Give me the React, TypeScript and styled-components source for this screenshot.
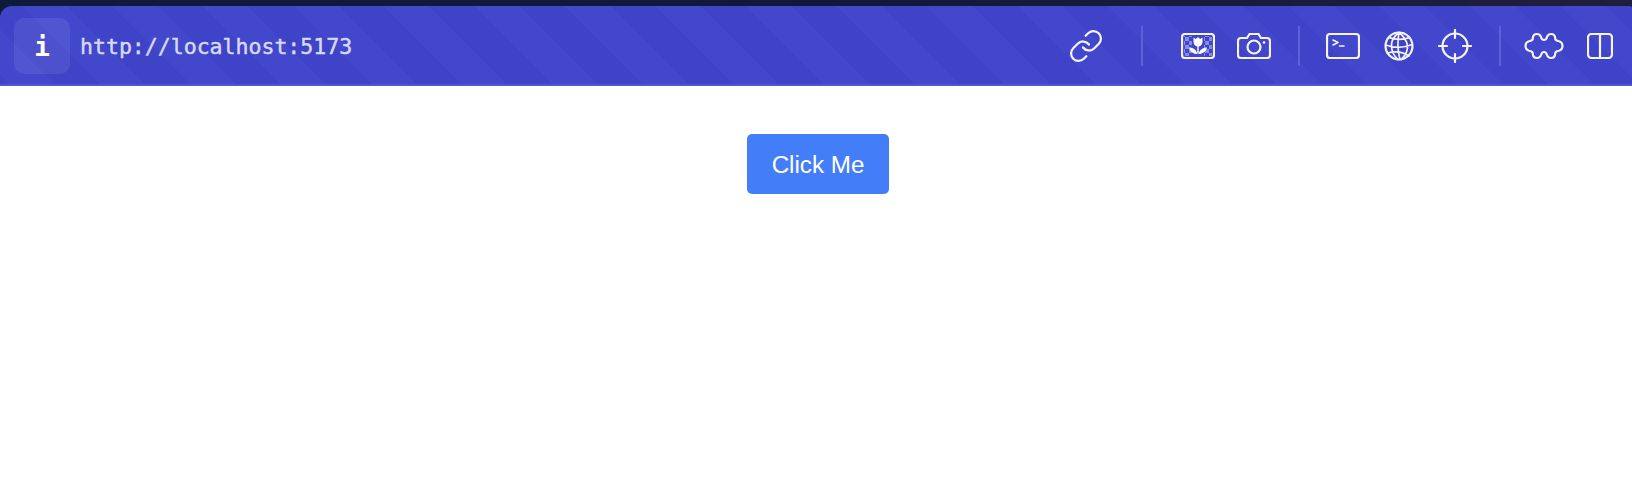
import React from "react";
import styled, { createGlobalStyle } from "styled-components";

const GlobalStyle = createGlobalStyle`
  html, body {
    margin: 0;
    background: #ffffff;
  }
`;

const TopEdge = styled.div`
  padding-top: 6px;
  background: linear-gradient(90deg, #0f1b3b 0%, #10193a 50%, #1f1f3d 100%);
`;

const Toolbar = styled.header`
  height: 80px;
  box-sizing: border-box;
  display: flex;
  align-items: center;
  padding: 2px 4px 0 14px;
  border-bottom: 2px solid #5055d0;
  border-radius: 12px 2px 0 0;
  background: repeating-linear-gradient(
    45deg,
    #3f43c8 0 6.5px,
    #4347cc 6.5px 38.5px,
    #3f43c8 38.5px 64px
  );
`;

const InfoBadge = styled.div`
  width: 56px;
  height: 56px;
  padding-top: 1px;
  box-sizing: border-box;
  border-radius: 10px;
  display: flex;
  align-items: center;
  justify-content: center;
  background: rgba(255, 255, 255, 0.08);
  color: #ffffff;
  font: 700 26px "DejaVu Sans Mono", monospace;
`;

const Url = styled.span`
  margin-left: 10px;
  padding-top: 1px;
  flex: 1;
  color: #d6d9f6;
  font: 400 21.6px "DejaVu Sans Mono", monospace;
  letter-spacing: -0.04px;
  -webkit-text-stroke: 0.45px #d6d9f6;
`;

const IconSlot = styled.div`
  width: 56px;
  height: 56px;
  display: flex;
  align-items: center;
  justify-content: center;

  svg {
    display: block;
    fill: none;
    stroke: #f4f4ff;
    stroke-width: 2.2;
    stroke-linecap: round;
    stroke-linejoin: round;
  }
`;

const Divider = styled.div<{ $left: number }>`
  width: 2px;
  height: 40px;
  margin: 0 ${(p) => (p.$left > 20 ? 27 : 15)}px 0 ${(p) => p.$left}px;
  background: #5d61d8;
`;

const Stage = styled.main`
  height: 400px;
  display: flex;
  justify-content: center;
  align-items: flex-start;
  padding: 48px 0 0 4px;
  box-sizing: border-box;
`;

const ActionButton = styled.button`
  width: 142px;
  height: 60px;
  padding: 2px 0 0;
  border: none;
  border-radius: 5px;
  background: #437ef8;
  color: #ffffff;
  font: 400 24.2px "Liberation Sans", Arial, sans-serif;
`;

const LinkIcon = () => (
  <svg width="36" height="36" viewBox="0 0 24 24" style={{ strokeWidth: 1.5 }}>
    <path d="M10 13a5 5 0 0 0 7.540.540l3-3a5 5 0 0 0-7.070-7.070l-1.720 1.710" />
    <path d="M14 11a5 5 0 0 0-7.540-.540l-3 3a5 5 0 0 0 7.070 7.070l1.710-1.710" />
  </svg>
);

const TulipIcon = () => (
  <svg width="34" height="26" viewBox="0 0 34 26">
    <defs>
      <pattern id="checks" width="8" height="8" patternUnits="userSpaceOnUse">
        <rect width="4" height="4" fill="#ffffff" fillOpacity="0.38" stroke="none" />
        <rect x="4" y="4" width="4" height="4" fill="#ffffff" fillOpacity="0.38" stroke="none" />
      </pattern>
    </defs>
    <rect x="1" y="1" width="32" height="24" rx="3" />
    <rect x="3" y="3" width="8" height="20" fill="url(#checks)" stroke="none" />
    <rect x="23" y="3" width="8" height="20" fill="url(#checks)" stroke="none" />
    <path
      d="M12.500 4.500l2.300 1.500L17 4l2.200 2 2.300-1.500v4.500a4.500 4.500 0 0 1-9 0z"
      fill="#ffffff"
      stroke="none"
    />
    <path d="M16.300 21c-4 0-7.300-2.200-8.300-6.500 4.200 0 7.500 2.300 8.300 6.500zM17.700 21c4 0 7.300-2.200 8.300-6.500-4.200 0-7.500 2.300-8.300 6.500z" fill="#ffffff" stroke="none" />
    <path d="M17 12v8" strokeWidth="1.500" />
  </svg>
);

const CameraIcon = () => (
  <svg width="34" height="26" viewBox="0 0 34 26">
    <path d="M4 5h6l2.500-4h9L24 5h6a3 3 0 0 1 3 3v14a3 3 0 0 1-3 3H4a3 3 0 0 1-3-3V8a3 3 0 0 1 3-3z" />
    <circle cx="17" cy="14" r="6.500" />
    <circle cx="27" cy="9.500" r="1.300" fill="#ffffff" stroke="none" />
  </svg>
);

const TerminalIcon = () => (
  <svg width="34" height="26" viewBox="0 0 34 26">
    <rect x="1" y="1" width="32" height="24" rx="3" />
    <path d="M7 7l5 2.500-5 2.500M13.500 13H18" strokeWidth="1.600" />
  </svg>
);

const GlobeIcon = () => (
  <svg width="30" height="30" viewBox="0 0 30 30">
    <circle cx="15" cy="15" r="13.500" />
    <path
      d="M15 1.500C9 6 7 11 7.500 16s2 8.500 6.500 12.500M15 1.500c5 4 8 8.500 8.500 13.500s-2 9-6 13.500M15 1.500c-1.500 8-1.500 18 1 27M5 6.500c6 2.500 15 2.500 20.500 0M1.700 14c8 3 18 3 26.500-.5M3.500 22c7-2 15-1.500 21.500 3"
      strokeWidth="1.700"
    />
  </svg>
);

const CrosshairIcon = () => (
  <svg width="34" height="34" viewBox="0 0 34 34">
    <circle cx="17" cy="17" r="12.500" />
    <path d="M17 1v8M17 25v8M1 17h8M25 17h8" />
  </svg>
);

const PuzzleIcon = () => (
  <svg width="40" height="28" viewBox="0 0 40 28">
    <path d="M13 2c2.500 0 3.500 1.500 4 3 .4 1.600 1.500 3 3 3s2.600-1.400 3-3c.5-1.500 1.500-3 4-3 2.500 0 4.200 1.800 4.200 4.500 0 1.500.8 2.100 2.800 2.500 2.500.5 4.500 2 4.500 5s-2 4.500-4.500 5c-2 .4-2.800 1-2.800 2.500 0 2.700-1.700 4.500-4.200 4.500-2.500 0-3.500-1.500-4-3-.4-1.600-1.500-3-3-3s-2.600 1.400-3 3c-.5 1.500-1.500 3-4 3-2.500 0-4.200-1.800-4.200-4.500 0-1.500-.8-2.100-2.800-2.500-2.500-.5-4.500-2-4.500-5s2-4.500 4.500-5c2-.4 2.800-1 2.800-2.500C8.800 3.800 10.500 2 13 2z" />
  </svg>
);

const PanelIcon = () => (
  <svg width="26" height="26" viewBox="0 0 26 26">
    <rect x="1" y="1" width="24" height="24" rx="3.500" />
    <path d="M13 1v24" />
  </svg>
);

function App() {
  return (
    <>
      <GlobalStyle />
      <TopEdge>
        <Toolbar>
          <InfoBadge>i</InfoBadge>
          <Url>http://localhost:5173</Url>
          <IconSlot><LinkIcon /></IconSlot>
          <Divider $left={27} />
          <IconSlot><TulipIcon /></IconSlot>
          <IconSlot><CameraIcon /></IconSlot>
          <Divider $left={16} />
          <IconSlot><TerminalIcon /></IconSlot>
          <IconSlot><GlobeIcon /></IconSlot>
          <IconSlot><CrosshairIcon /></IconSlot>
          <Divider $left={16} />
          <IconSlot><PuzzleIcon /></IconSlot>
          <IconSlot><PanelIcon /></IconSlot>
        </Toolbar>
      </TopEdge>
      <Stage>
        <ActionButton>Click Me</ActionButton>
      </Stage>
    </>
  );
}

export default App;
